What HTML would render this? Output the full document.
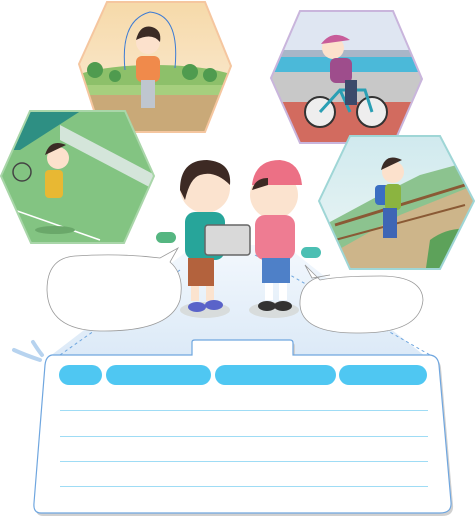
<!DOCTYPE html>
<html><head><style>
body{margin:0;width:475px;height:519px;overflow:hidden;background:#fff;font-family:"Liberation Sans",sans-serif}
svg{position:absolute;left:0;top:0}
</style></head><body>
<svg width="475" height="519" viewBox="0 0 475 519">
<defs>
<clipPath id="h1"><polygon points="107,2 205,2 231,66 205,132 101,132 79,64"/></clipPath>
<clipPath id="h2"><polygon points="300,11 393,11 422,79 394,143 300,143 271,78"/></clipPath>
<clipPath id="h3"><polygon points="30,111 125,111 154,176 124,243 31,243 1,176"/></clipPath>
<clipPath id="h4"><polygon points="350,136 440,136 474,201 440,269 350,269 319,201"/></clipPath>
<linearGradient id="sky1" x1="0" y1="0" x2="0" y2="1"><stop offset="0" stop-color="#f6d9a8"/><stop offset="1" stop-color="#fbeedd"/></linearGradient>
<linearGradient id="sky4" x1="0" y1="0" x2="0" y2="1"><stop offset="0" stop-color="#cfe9ee"/><stop offset="1" stop-color="#eef7f5"/></linearGradient>
<linearGradient id="stage" x1="0" y1="0" x2="0" y2="1"><stop offset="0" stop-color="#f3f8fd"/><stop offset="1" stop-color="#dbe9f7"/></linearGradient>
</defs>
<!-- stage -->
<polygon points="195,245 285,245 430,360 45,360" fill="url(#stage)"/>
<line x1="180" y1="270" x2="60" y2="355" stroke="#6fa6df" stroke-dasharray="3,3"/>
<line x1="255" y1="255" x2="430" y2="355" stroke="#6fa6df" stroke-dasharray="3,3"/>
<!-- hex 1 jump rope -->
<g clip-path="url(#h1)">
<rect x="70" y="0" width="170" height="140" fill="url(#sky1)"/>
<ellipse cx="155" cy="85" rx="90" ry="20" fill="#8dc06a"/>
<rect x="70" y="85" width="170" height="15" fill="#a6cf7e"/>
<rect x="70" y="95" width="170" height="45" fill="#c9a978"/>
<circle cx="95" cy="70" r="8" fill="#4f9b4f"/><circle cx="190" cy="72" r="8" fill="#4f9b4f"/><circle cx="210" cy="75" r="7" fill="#4f9b4f"/><circle cx="115" cy="76" r="6" fill="#4f9b4f"/>
<path d="M125,70 Q120,20 150,12 Q180,15 175,68" fill="none" stroke="#3c7bd4"/>
<circle cx="148" cy="42" r="12" fill="#fce1cc"/><path d="M136,40 Q140,24 152,27 Q162,30 160,42 Q152,32 136,40Z" fill="#3b2b25"/>
<rect x="136" y="56" width="24" height="26" rx="6" fill="#f08a4b"/>
<rect x="141" y="80" width="14" height="28" fill="#bfc6cf"/>
</g>
<polygon points="107,2 205,2 231,66 205,132 101,132 79,64" fill="none" stroke="#f5c69f" stroke-width="2"/>
<!-- hex 2 bike -->
<g clip-path="url(#h2)">
<rect x="265" y="5" width="165" height="145" fill="#dfe6f2"/>
<rect x="265" y="50" width="165" height="7" fill="#a8b6c8"/>
<rect x="265" y="57" width="165" height="15" fill="#4bb9d9"/>
<rect x="265" y="72" width="165" height="38" fill="#c8c8c8"/>
<rect x="265" y="102" width="165" height="45" fill="#d26b5f"/>
<circle cx="320" cy="112" r="15" fill="#eee" stroke="#333" stroke-width="2"/>
<circle cx="372" cy="112" r="15" fill="#eee" stroke="#333" stroke-width="2"/>
<path d="M320,112 L340,90 L365,90 L372,112 M340,90 L350,112" stroke="#2a9fb4" stroke-width="3" fill="none"/>
<circle cx="333" cy="48" r="11" fill="#fce1cc"/><path d="M321,44 Q333,28 350,40Z" fill="#c85c9a"/>
<rect x="330" y="58" width="22" height="25" rx="6" fill="#9e4d8c"/>
<rect x="345" y="80" width="12" height="25" fill="#3b4a6b"/>
</g>
<polygon points="300,11 393,11 422,79 394,143 300,143 271,78" fill="none" stroke="#c9b5dc" stroke-width="2"/>
<!-- hex 3 tennis -->
<g clip-path="url(#h3)">
<rect x="0" y="105" width="160" height="145" fill="#83c482"/>
<polygon points="0,105 90,105 20,150 0,150" fill="#2e8f83"/>
<polygon points="60,125 155,175 155,190 60,140" fill="#e9eef0" opacity=".8"/>
<line x1="0" y1="205" x2="100" y2="240" stroke="#fff" stroke-width="1.5"/>
<circle cx="58" cy="158" r="11" fill="#fce1cc"/><path d="M45,155 Q50,138 66,145Z" fill="#3b2b25"/>
<rect x="45" y="170" width="18" height="28" rx="4" fill="#e8b833"/>
<circle cx="22" cy="172" r="9" fill="none" stroke="#444" stroke-width="1.5"/>
<ellipse cx="55" cy="230" rx="20" ry="4" fill="#6aa86a"/>
</g>
<polygon points="30,111 125,111 154,176 124,243 31,243 1,176" fill="none" stroke="#a9d6a9" stroke-width="2"/>
<!-- hex 4 hiking -->
<g clip-path="url(#h4)">
<rect x="315" y="130" width="165" height="145" fill="url(#sky4)"/>
<path d="M315,230 L380,195 L420,175 L475,160 L475,275 L315,275Z" fill="#8cc38f"/>
<path d="M320,260 L400,215 L475,185 L475,275 L320,275Z" fill="#cdb58a"/>
<path d="M430,240 Q450,225 475,230 L475,275 L425,275Z" fill="#5da25a"/>
<path d="M335,225 L465,185" stroke="#8a5a35" stroke-width="3"/>
<path d="M335,240 L465,205" stroke="#8a5a35" stroke-width="2"/>
<circle cx="393" cy="172" r="11" fill="#fce1cc"/><path d="M381,170 Q385,152 402,160Z" fill="#3b2b25"/>
<rect x="375" y="185" width="14" height="20" rx="4" fill="#3a6ec2"/>
<rect x="385" y="184" width="16" height="26" rx="4" fill="#8bb440"/>
<rect x="383" y="208" width="14" height="30" fill="#3e66b5"/>
</g>
<polygon points="350,136 440,136 474,201 440,269 350,269 319,201" fill="none" stroke="#9fd6d6" stroke-width="2"/>
<!-- kids -->
<ellipse cx="205" cy="310" rx="25" ry="8" fill="#d8dcdc"/>
<ellipse cx="274" cy="310" rx="25" ry="8" fill="#d8dcdc"/>
<circle cx="205" cy="188" r="25" fill="#fbe3cf"/>
<path d="M180,190 Q180,160 207,160 Q232,162 230,185 Q215,170 200,175 Q190,178 185,200Z" fill="#3d2a24"/>
<rect x="185" y="212" width="40" height="48" rx="10" fill="#27a59a"/>
<rect x="188" y="258" width="26" height="28" fill="#b3623d"/>
<rect x="191" y="286" width="8" height="15" fill="#fbe3cf"/><rect x="206" y="286" width="8" height="15" fill="#fbe3cf"/>
<ellipse cx="197" cy="307" rx="9" ry="5" fill="#5a63c9"/><ellipse cx="214" cy="305" rx="9" ry="5" fill="#5a63c9"/>
<rect x="205" y="225" width="45" height="30" rx="3" fill="#d9d9d9" stroke="#666" stroke-width="1.5"/>
<circle cx="274" cy="195" r="24" fill="#fbe3cf"/>
<path d="M252,185 Q255,160 280,160 Q300,162 302,185Z" fill="#ec7085"/>
<path d="M252,190 Q255,178 268,178 L268,185Z" fill="#3d2a24"/>
<rect x="255" y="215" width="40" height="45" rx="10" fill="#ee7c92"/>
<rect x="262" y="258" width="28" height="25" fill="#4e80c8"/>
<rect x="265" y="283" width="8" height="17" fill="#fff"/><rect x="279" y="283" width="8" height="17" fill="#fff"/>
<ellipse cx="267" cy="306" rx="9" ry="5" fill="#333"/><ellipse cx="283" cy="306" rx="9" ry="5" fill="#333"/>
<rect x="156" y="232" width="20" height="11" rx="5.5" fill="#55b681"/>
<rect x="301" y="247" width="20" height="11" rx="5.5" fill="#4bbfb3"/>
<!-- bubbles -->
<path d="M75,256 Q47,258 47,290 Q48,330 100,331 Q170,332 180,300 Q185,275 170,262 L178,248 L160,258 Q120,253 75,256Z" fill="#fff" stroke="#999" stroke-width="0.8"/>
<path d="M330,275 Q299,278 300,305 Q302,334 360,333 Q420,333 423,300 Q422,276 380,276 Q340,276 320,280 L305,265 L312,278Z" fill="#fff" stroke="#999" stroke-width="0.8"/>
<!-- splash -->
<path d="M14,350 Q25,355 40,360" stroke="#b7d3ef" stroke-width="4" stroke-linecap="round"/>
<path d="M33,342 Q38,350 42,355" stroke="#b7d3ef" stroke-width="4" stroke-linecap="round"/>
<!-- panel -->
<path d="M52,355 L192,355 L192,342 Q192,340 195,340 L290,340 Q293,340 293,343 L293,355 L430,355 Q438,356 439,365 L451,502 Q452,513 440,513 L41,513 Q33,513 34,503 L45,365 Q46,356 52,355Z" fill="#d0d0d0" transform="translate(2,3)"/>
<path d="M52,355 L192,355 L192,342 Q192,340 195,340 L290,340 Q293,340 293,343 L293,355 L430,355 Q438,356 439,365 L451,502 Q452,513 440,513 L41,513 Q33,513 34,503 L45,365 Q46,356 52,355Z" fill="#fff" stroke="#6fa6df" stroke-width="1.2"/>
<rect x="59" y="365" width="43" height="20" rx="10" fill="#4fc7f2"/>
<rect x="106" y="365" width="105" height="20" rx="10" fill="#4fc7f2"/>
<rect x="215" y="365" width="121" height="20" rx="10" fill="#4fc7f2"/>
<rect x="339" y="365" width="88" height="20" rx="10" fill="#4fc7f2"/>
<g stroke="#9fdcf5" stroke-width="1"><line x1="60" y1="410.5" x2="428" y2="410.5"/><line x1="60" y1="436.5" x2="428" y2="436.5"/><line x1="60" y1="461.5" x2="428" y2="461.5"/><line x1="60" y1="486.5" x2="428" y2="486.5"/></g>
</svg>
</body></html>
